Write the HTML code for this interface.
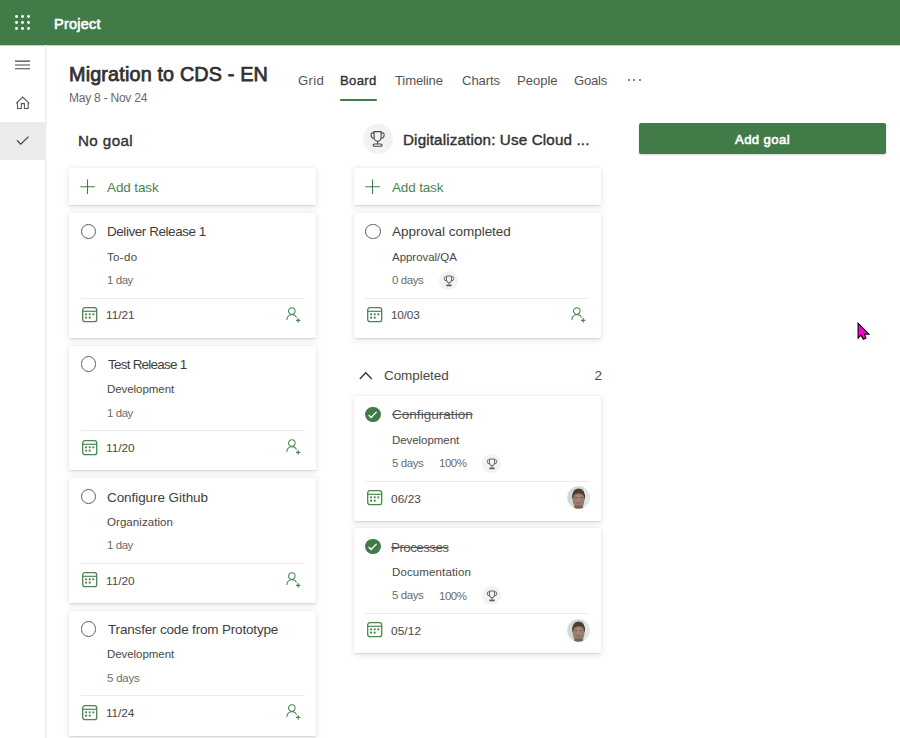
<!DOCTYPE html>
<html><head><meta charset="utf-8"><style>
html,body{margin:0;padding:0;width:900px;height:738px;overflow:hidden;background:#fff}
body{position:relative;font-family:"Liberation Sans",sans-serif}
.t{position:absolute;white-space:nowrap}
</style></head><body>
<div style="position:absolute;left:0px;top:0px;width:900px;height:45px;background:#407b48;box-shadow:0 0.6px 0.6px rgba(64,123,72,.35)"></div>
<svg style="position:absolute;left:14.8px;top:15.2px" width="3" height="3" viewBox="0 0 3 3"><circle cx="1.5" cy="1.5" r="1.45" fill="#fff"/></svg>
<svg style="position:absolute;left:14.8px;top:20.9px" width="3" height="3" viewBox="0 0 3 3"><circle cx="1.5" cy="1.5" r="1.45" fill="#fff"/></svg>
<svg style="position:absolute;left:14.8px;top:26.6px" width="3" height="3" viewBox="0 0 3 3"><circle cx="1.5" cy="1.5" r="1.45" fill="#fff"/></svg>
<svg style="position:absolute;left:20.700000000000003px;top:15.2px" width="3" height="3" viewBox="0 0 3 3"><circle cx="1.5" cy="1.5" r="1.45" fill="#fff"/></svg>
<svg style="position:absolute;left:20.700000000000003px;top:20.9px" width="3" height="3" viewBox="0 0 3 3"><circle cx="1.5" cy="1.5" r="1.45" fill="#fff"/></svg>
<svg style="position:absolute;left:20.700000000000003px;top:26.6px" width="3" height="3" viewBox="0 0 3 3"><circle cx="1.5" cy="1.5" r="1.45" fill="#fff"/></svg>
<svg style="position:absolute;left:26.6px;top:15.2px" width="3" height="3" viewBox="0 0 3 3"><circle cx="1.5" cy="1.5" r="1.45" fill="#fff"/></svg>
<svg style="position:absolute;left:26.6px;top:20.9px" width="3" height="3" viewBox="0 0 3 3"><circle cx="1.5" cy="1.5" r="1.45" fill="#fff"/></svg>
<svg style="position:absolute;left:26.6px;top:26.6px" width="3" height="3" viewBox="0 0 3 3"><circle cx="1.5" cy="1.5" r="1.45" fill="#fff"/></svg>
<div class="t" style="left:54.00px;top:17.00px;font-size:14.5px;line-height:14.5px;color:#fff;font-weight:400;letter-spacing:0.217px;-webkit-text-stroke:0.6px #fff;">Project</div>
<div style="position:absolute;left:45px;top:45px;width:1px;height:693px;background:#eeedec"></div>
<div style="position:absolute;left:46px;top:45px;width:1px;height:693px;background:#f5f4f3"></div>
<div style="position:absolute;left:0px;top:121.6px;width:45.4px;height:38.2px;background:#edebe9"></div>
<svg style="position:absolute;left:14px;top:58px" width="17" height="13" viewBox="0 0 17 13"><path d="M1 3.1 H16 M1 7 H16 M1 10.8 H16" stroke="#484644" stroke-width="1.05"/></svg>
<svg style="position:absolute;left:15px;top:95px" width="16" height="15" viewBox="0 0 16 15"><path d="M1.2 8.3 L7.7 2 L14.2 8.3 M2.5 7 V13.5 H6.3 V8.6 H9.4 V13.5 H13.2 V7" fill="none" stroke="#575553" stroke-width="1.05"/></svg>
<svg style="position:absolute;left:16px;top:135px" width="14" height="11" viewBox="0 0 14 11"><path d="M1.0 5.3 L4.7 9.1 L12.5 1.6" fill="none" stroke="#3b3a39" stroke-width="1.2"/></svg>
<div class="t" style="left:69.00px;top:65.00px;font-size:19.8px;line-height:19.8px;color:#323130;font-weight:400;letter-spacing:0.160px;-webkit-text-stroke:0.75px #323130;">Migration to CDS - EN</div>
<div class="t" style="left:69.00px;top:92.00px;font-size:12.0px;line-height:12.0px;color:#6a6866;font-weight:400;letter-spacing:-0.231px;">May 8 - Nov 24</div>
<div class="t" style="left:298.00px;top:74.00px;font-size:13.1px;line-height:13.1px;color:#565452;font-weight:400;letter-spacing:0.333px;">Grid</div>
<div class="t" style="left:340.00px;top:74.00px;font-size:13.1px;line-height:13.1px;color:#323130;font-weight:400;letter-spacing:0.350px;-webkit-text-stroke:0.35px #323130;">Board</div>
<div class="t" style="left:395.00px;top:74.00px;font-size:13.1px;line-height:13.1px;color:#565452;font-weight:400;letter-spacing:-0.143px;">Timeline</div>
<div class="t" style="left:462.00px;top:74.00px;font-size:13.1px;line-height:13.1px;color:#565452;font-weight:400;letter-spacing:-0.080px;">Charts</div>
<div class="t" style="left:517.00px;top:74.00px;font-size:13.1px;line-height:13.1px;color:#565452;font-weight:400;letter-spacing:-0.040px;">People</div>
<div class="t" style="left:574.00px;top:74.00px;font-size:13.1px;line-height:13.1px;color:#565452;font-weight:400;letter-spacing:-0.250px;">Goals</div>
<div style="position:absolute;left:340px;top:98.6px;width:37px;height:2px;background:#407b48;border-radius:1px"></div>
<div style="position:absolute;left:627.5px;top:79px;width:2px;height:2px;background:#605e5c;border-radius:50%"></div>
<div style="position:absolute;left:633.3px;top:79px;width:2px;height:2px;background:#605e5c;border-radius:50%"></div>
<div style="position:absolute;left:639.1px;top:79px;width:2px;height:2px;background:#605e5c;border-radius:50%"></div>
<div class="t" style="left:78.00px;top:133.00px;font-size:15.2px;line-height:15.2px;color:#323130;font-weight:400;letter-spacing:0.400px;-webkit-text-stroke:0.35px #323130;">No goal</div>
<div style="position:absolute;left:362.7px;top:123.7px;width:30px;height:30px;background:#f3f2f1;border-radius:50%"></div>
<svg style="position:absolute;left:369px;top:129px" width="18" height="19" viewBox="0 0 18 19"><path d="M5.1 2.6 H12.1 V8.2 A3.5 4 0 0 1 5.1 8.2 Z M5.1 3.9 H3.7 A1.6 1.6 0 0 0 2.1 5.5 V6.2 A3.2 3.2 0 0 0 5.4 9.5 M12.1 3.9 H13.5 A1.6 1.6 0 0 1 15.1 5.5 V6.2 A3.2 3.2 0 0 1 11.8 9.5 M8.6 12.2 V15 M5.3 15 H11.9 A0.9 0.9 0 0 1 11.9 17.3 H5.3 A0.9 0.9 0 0 1 5.3 15 Z" fill="none" stroke="#484644" stroke-width="1.1"/></svg>
<div class="t" style="left:403.00px;top:132.00px;font-size:15.2px;line-height:15.2px;color:#323130;font-weight:400;letter-spacing:0.145px;-webkit-text-stroke:0.4px #323130;">Digitalization: Use Cloud ...</div>
<div style="position:absolute;left:639px;top:123.4px;width:246.5px;height:30.8px;background:#407b48;border-radius:2px;box-shadow:0 1px 2px rgba(0,0,0,.2)"></div>
<div class="t" style="left:735.00px;top:133.00px;font-size:13.1px;line-height:13.1px;color:#fff;font-weight:400;letter-spacing:0.412px;-webkit-text-stroke:0.6px #fff;">Add goal</div>
<div style="position:absolute;left:69.3px;top:167.7px;width:247px;height:37.4px;background:#fff;border-radius:1.5px;box-shadow:0 1.8px 7px rgba(0,0,0,.11),0 0.3px 1.4px rgba(0,0,0,.10)"></div>
<svg style="position:absolute;left:80.3px;top:178.5px" width="16" height="16" viewBox="0 0 16 16"><path d="M7.5 0.5 V15 M0.3 7.7 H14.8" fill="none" stroke="#407b48" stroke-width="1.1"/></svg>
<div class="t" style="left:107.00px;top:181.00px;font-size:13.5px;line-height:13.5px;color:#4a8550;font-weight:400;letter-spacing:-0.116px;">Add task</div>
<div style="position:absolute;left:354.0px;top:167.7px;width:247px;height:37.4px;background:#fff;border-radius:1.5px;box-shadow:0 1.8px 7px rgba(0,0,0,.11),0 0.3px 1.4px rgba(0,0,0,.10)"></div>
<svg style="position:absolute;left:365.0px;top:178.5px" width="16" height="16" viewBox="0 0 16 16"><path d="M7.5 0.5 V15 M0.3 7.7 H14.8" fill="none" stroke="#407b48" stroke-width="1.1"/></svg>
<div class="t" style="left:392.00px;top:181.00px;font-size:13.5px;line-height:13.5px;color:#4a8550;font-weight:400;letter-spacing:-0.160px;">Add task</div>
<div style="position:absolute;left:69.3px;top:213.0px;width:247px;height:124.9px;background:#fff;border-radius:1.5px;box-shadow:0 1.8px 7px rgba(0,0,0,.11),0 0.3px 1.4px rgba(0,0,0,.10)"></div>
<div style="position:absolute;left:80.60px;top:223.50px;width:13.5px;height:13.5px;border-radius:50%;border:1px solid #605e5c"></div>
<div class="t" style="left:107.00px;top:225.00px;font-size:13.5px;line-height:13.5px;color:#3f3e3d;font-weight:400;letter-spacing:-0.448px;">Deliver Release 1</div>
<div class="t" style="left:107.00px;top:252.00px;font-size:11.5px;line-height:11.5px;color:#4a4846;font-weight:400;letter-spacing:0.325px;">To-do</div>
<div class="t" style="left:107.00px;top:275.00px;font-size:11.5px;line-height:11.5px;color:#6e6c6a;font-weight:400;letter-spacing:-0.450px;">1 day</div>
<div style="position:absolute;left:80.6px;top:297.6px;width:224px;height:1px;background:#edebe9"></div>
<svg style="position:absolute;left:81.8px;top:307.0px" width="16" height="16" viewBox="0 0 16 16"><rect x="0.7" y="0.7" width="14" height="14" rx="2.2" fill="none" stroke="#4b8552" stroke-width="1.3"/><path d="M0.7 4.3 H14.7" stroke="#4b8552" stroke-width="1.2"/><circle cx="4.1" cy="7.3" r="1.1" fill="#4b8552"/><circle cx="7.7" cy="7.3" r="1.1" fill="#4b8552"/><circle cx="11.3" cy="7.3" r="1.1" fill="#4b8552"/><circle cx="4.1" cy="10.7" r="1.1" fill="#4b8552"/><circle cx="7.7" cy="10.7" r="1.1" fill="#4b8552"/></svg>
<div class="t" style="left:106.00px;top:310.00px;font-size:11.8px;line-height:11.8px;color:#4a4846;font-weight:400;letter-spacing:-0.025px;">11/21</div>
<svg style="position:absolute;left:286.4px;top:306.5px" width="17" height="17" viewBox="0 0 17 17"><circle cx="5.8" cy="4.1" r="3.3" fill="none" stroke="#4b8552" stroke-width="1.05"/><path d="M0.9 12.9 A5.2 5.4 0 0 1 10.6 10.4" fill="none" stroke="#4b8552" stroke-width="1.05"/><path d="M12.2 11.2 V15.6 M10 13.4 H14.4" stroke="#4b8552" stroke-width="1.25"/></svg>
<div style="position:absolute;left:69.3px;top:345.6px;width:247px;height:124.9px;background:#fff;border-radius:1.5px;box-shadow:0 1.8px 7px rgba(0,0,0,.11),0 0.3px 1.4px rgba(0,0,0,.10)"></div>
<div style="position:absolute;left:80.60px;top:356.10px;width:13.5px;height:13.5px;border-radius:50%;border:1px solid #605e5c"></div>
<div class="t" style="left:108.00px;top:358.00px;font-size:13.5px;line-height:13.5px;color:#3f3e3d;font-weight:400;letter-spacing:-0.775px;">Test Release 1</div>
<div class="t" style="left:107.00px;top:384.00px;font-size:11.5px;line-height:11.5px;color:#4a4846;font-weight:400;letter-spacing:-0.060px;">Development</div>
<div class="t" style="left:107.00px;top:408.00px;font-size:11.5px;line-height:11.5px;color:#6e6c6a;font-weight:400;letter-spacing:-0.450px;">1 day</div>
<div style="position:absolute;left:80.6px;top:430.20000000000005px;width:224px;height:1px;background:#edebe9"></div>
<svg style="position:absolute;left:81.8px;top:439.6px" width="16" height="16" viewBox="0 0 16 16"><rect x="0.7" y="0.7" width="14" height="14" rx="2.2" fill="none" stroke="#4b8552" stroke-width="1.3"/><path d="M0.7 4.3 H14.7" stroke="#4b8552" stroke-width="1.2"/><circle cx="4.1" cy="7.3" r="1.1" fill="#4b8552"/><circle cx="7.7" cy="7.3" r="1.1" fill="#4b8552"/><circle cx="11.3" cy="7.3" r="1.1" fill="#4b8552"/><circle cx="4.1" cy="10.7" r="1.1" fill="#4b8552"/><circle cx="7.7" cy="10.7" r="1.1" fill="#4b8552"/></svg>
<div class="t" style="left:106.00px;top:443.00px;font-size:11.8px;line-height:11.8px;color:#4a4846;font-weight:400;letter-spacing:-0.025px;">11/20</div>
<svg style="position:absolute;left:286.4px;top:439.1px" width="17" height="17" viewBox="0 0 17 17"><circle cx="5.8" cy="4.1" r="3.3" fill="none" stroke="#4b8552" stroke-width="1.05"/><path d="M0.9 12.9 A5.2 5.4 0 0 1 10.6 10.4" fill="none" stroke="#4b8552" stroke-width="1.05"/><path d="M12.2 11.2 V15.6 M10 13.4 H14.4" stroke="#4b8552" stroke-width="1.25"/></svg>
<div style="position:absolute;left:69.3px;top:478.2px;width:247px;height:124.9px;background:#fff;border-radius:1.5px;box-shadow:0 1.8px 7px rgba(0,0,0,.11),0 0.3px 1.4px rgba(0,0,0,.10)"></div>
<div style="position:absolute;left:80.60px;top:488.70px;width:13.5px;height:13.5px;border-radius:50%;border:1px solid #605e5c"></div>
<div class="t" style="left:107.00px;top:491.00px;font-size:13.5px;line-height:13.5px;color:#3f3e3d;font-weight:400;letter-spacing:-0.067px;">Configure Github</div>
<div class="t" style="left:107.00px;top:517.00px;font-size:11.5px;line-height:11.5px;color:#4a4846;font-weight:400;letter-spacing:0.061px;">Organization</div>
<div class="t" style="left:107.00px;top:540.00px;font-size:11.5px;line-height:11.5px;color:#6e6c6a;font-weight:400;letter-spacing:-0.450px;">1 day</div>
<div style="position:absolute;left:80.6px;top:562.8px;width:224px;height:1px;background:#edebe9"></div>
<svg style="position:absolute;left:81.8px;top:572.2px" width="16" height="16" viewBox="0 0 16 16"><rect x="0.7" y="0.7" width="14" height="14" rx="2.2" fill="none" stroke="#4b8552" stroke-width="1.3"/><path d="M0.7 4.3 H14.7" stroke="#4b8552" stroke-width="1.2"/><circle cx="4.1" cy="7.3" r="1.1" fill="#4b8552"/><circle cx="7.7" cy="7.3" r="1.1" fill="#4b8552"/><circle cx="11.3" cy="7.3" r="1.1" fill="#4b8552"/><circle cx="4.1" cy="10.7" r="1.1" fill="#4b8552"/><circle cx="7.7" cy="10.7" r="1.1" fill="#4b8552"/></svg>
<div class="t" style="left:106.00px;top:576.00px;font-size:11.8px;line-height:11.8px;color:#4a4846;font-weight:400;letter-spacing:-0.025px;">11/20</div>
<svg style="position:absolute;left:286.4px;top:571.7px" width="17" height="17" viewBox="0 0 17 17"><circle cx="5.8" cy="4.1" r="3.3" fill="none" stroke="#4b8552" stroke-width="1.05"/><path d="M0.9 12.9 A5.2 5.4 0 0 1 10.6 10.4" fill="none" stroke="#4b8552" stroke-width="1.05"/><path d="M12.2 11.2 V15.6 M10 13.4 H14.4" stroke="#4b8552" stroke-width="1.25"/></svg>
<div style="position:absolute;left:69.3px;top:610.8px;width:247px;height:124.9px;background:#fff;border-radius:1.5px;box-shadow:0 1.8px 7px rgba(0,0,0,.11),0 0.3px 1.4px rgba(0,0,0,.10)"></div>
<div style="position:absolute;left:80.60px;top:621.30px;width:13.5px;height:13.5px;border-radius:50%;border:1px solid #605e5c"></div>
<div class="t" style="left:108.00px;top:623.00px;font-size:13.5px;line-height:13.5px;color:#3f3e3d;font-weight:400;letter-spacing:-0.175px;">Transfer code from Prototype</div>
<div class="t" style="left:107.00px;top:649.00px;font-size:11.5px;line-height:11.5px;color:#4a4846;font-weight:400;letter-spacing:-0.060px;">Development</div>
<div class="t" style="left:107.00px;top:673.00px;font-size:11.5px;line-height:11.5px;color:#6e6c6a;font-weight:400;letter-spacing:-0.220px;">5 days</div>
<div style="position:absolute;left:80.6px;top:695.4px;width:224px;height:1px;background:#edebe9"></div>
<svg style="position:absolute;left:81.8px;top:704.8px" width="16" height="16" viewBox="0 0 16 16"><rect x="0.7" y="0.7" width="14" height="14" rx="2.2" fill="none" stroke="#4b8552" stroke-width="1.3"/><path d="M0.7 4.3 H14.7" stroke="#4b8552" stroke-width="1.2"/><circle cx="4.1" cy="7.3" r="1.1" fill="#4b8552"/><circle cx="7.7" cy="7.3" r="1.1" fill="#4b8552"/><circle cx="11.3" cy="7.3" r="1.1" fill="#4b8552"/><circle cx="4.1" cy="10.7" r="1.1" fill="#4b8552"/><circle cx="7.7" cy="10.7" r="1.1" fill="#4b8552"/></svg>
<div class="t" style="left:106.00px;top:708.00px;font-size:11.8px;line-height:11.8px;color:#4a4846;font-weight:400;letter-spacing:-0.075px;">11/24</div>
<svg style="position:absolute;left:286.4px;top:704.3px" width="17" height="17" viewBox="0 0 17 17"><circle cx="5.8" cy="4.1" r="3.3" fill="none" stroke="#4b8552" stroke-width="1.05"/><path d="M0.9 12.9 A5.2 5.4 0 0 1 10.6 10.4" fill="none" stroke="#4b8552" stroke-width="1.05"/><path d="M12.2 11.2 V15.6 M10 13.4 H14.4" stroke="#4b8552" stroke-width="1.25"/></svg>
<div style="position:absolute;left:354.0px;top:213.0px;width:247px;height:124.9px;background:#fff;border-radius:1.5px;box-shadow:0 1.8px 7px rgba(0,0,0,.11),0 0.3px 1.4px rgba(0,0,0,.10)"></div>
<div style="position:absolute;left:365.30px;top:223.50px;width:13.5px;height:13.5px;border-radius:50%;border:1px solid #605e5c"></div>
<div class="t" style="left:392.00px;top:225.00px;font-size:13.5px;line-height:13.5px;color:#3f3e3d;font-weight:400;letter-spacing:-0.029px;">Approval completed</div>
<div class="t" style="left:392.00px;top:252.00px;font-size:11.5px;line-height:11.5px;color:#4a4846;font-weight:400;letter-spacing:-0.040px;">Approval/QA</div>
<div class="t" style="left:392.00px;top:275.00px;font-size:11.5px;line-height:11.5px;color:#6e6c6a;font-weight:400;letter-spacing:-0.420px;">0 days</div>
<div style="position:absolute;left:439.3px;top:270.6px;width:19px;height:19px;background:#f3f2f1;border-radius:50%"></div>
<svg style="position:absolute;left:441.8px;top:273.8px" width="14" height="14" viewBox="0 0 14 14"><path d="M4.5 2.0 H9.5 V5.9 A2.5 2.9 0 0 1 4.5 5.9 Z M4.5 2.9 H3.4 A1.1 1.1 0 0 0 2.3 4 V4.5 A2.3 2.3 0 0 0 4.7 6.9 M9.5 2.9 H10.6 A1.1 1.1 0 0 1 11.7 4 V4.5 A2.3 2.3 0 0 1 9.3 6.9 M7 8.8 V10.6" fill="none" stroke="#605e5c" stroke-width="0.95"/><rect x="4.3" y="10.5" width="5.4" height="1.8" rx="0.6" fill="#605e5c"/></svg>
<div style="position:absolute;left:365.3px;top:297.6px;width:224px;height:1px;background:#edebe9"></div>
<svg style="position:absolute;left:366.5px;top:307.0px" width="16" height="16" viewBox="0 0 16 16"><rect x="0.7" y="0.7" width="14" height="14" rx="2.2" fill="none" stroke="#4b8552" stroke-width="1.3"/><path d="M0.7 4.3 H14.7" stroke="#4b8552" stroke-width="1.2"/><circle cx="4.1" cy="7.3" r="1.1" fill="#4b8552"/><circle cx="7.7" cy="7.3" r="1.1" fill="#4b8552"/><circle cx="11.3" cy="7.3" r="1.1" fill="#4b8552"/><circle cx="4.1" cy="10.7" r="1.1" fill="#4b8552"/><circle cx="7.7" cy="10.7" r="1.1" fill="#4b8552"/></svg>
<div class="t" style="left:391.00px;top:310.00px;font-size:11.8px;line-height:11.8px;color:#4a4846;font-weight:400;letter-spacing:-0.200px;">10/03</div>
<svg style="position:absolute;left:571.1px;top:306.5px" width="17" height="17" viewBox="0 0 17 17"><circle cx="5.8" cy="4.1" r="3.3" fill="none" stroke="#4b8552" stroke-width="1.05"/><path d="M0.9 12.9 A5.2 5.4 0 0 1 10.6 10.4" fill="none" stroke="#4b8552" stroke-width="1.05"/><path d="M12.2 11.2 V15.6 M10 13.4 H14.4" stroke="#4b8552" stroke-width="1.25"/></svg>
<svg style="position:absolute;left:358.5px;top:370.5px" width="14" height="9" viewBox="0 0 14 9"><path d="M0.8 8 L6.8 1.8 L12.8 8" fill="none" stroke="#323130" stroke-width="1.3"/></svg>
<div class="t" style="left:384.00px;top:369.00px;font-size:13.5px;line-height:13.5px;color:#4a4846;font-weight:400;letter-spacing:-0.075px;">Completed</div>
<div class="t" style="left:594.40px;top:369.00px;font-size:13.5px;line-height:13.5px;color:#4a4846;font-weight:400;">2</div>
<div style="position:absolute;left:354.0px;top:396.1px;width:247px;height:124.9px;background:#fff;border-radius:1.5px;box-shadow:0 1.8px 7px rgba(0,0,0,.11),0 0.3px 1.4px rgba(0,0,0,.10)"></div>
<div style="position:absolute;left:365.20px;top:406.50px;width:15.4px;height:15.4px;border-radius:50%;background:#407b48"></div>
<svg style="position:absolute;left:365.2px;top:406.5px" width="16" height="16" viewBox="0 0 16 16"><path d="M3.7 8.0 L6.1 10.5 L11.6 4.9" fill="none" stroke="#fff" stroke-width="1.35"/></svg>
<div class="t" style="left:392.00px;top:408.00px;font-size:13.5px;line-height:13.5px;color:#5a5856;font-weight:400;letter-spacing:0.035px;text-decoration:line-through">Configuration</div>
<div class="t" style="left:392.00px;top:435.00px;font-size:11.5px;line-height:11.5px;color:#4a4846;font-weight:400;letter-spacing:-0.060px;">Development</div>
<div class="t" style="left:392.00px;top:458.00px;font-size:11.5px;line-height:11.5px;color:#6e6c6a;font-weight:400;letter-spacing:-0.420px;">5 days</div>
<div class="t" style="left:439.00px;top:458.00px;font-size:11.5px;line-height:11.5px;color:#6e6c6a;font-weight:400;letter-spacing:-0.468px;">100%</div>
<div style="position:absolute;left:482.0px;top:453.70000000000005px;width:19px;height:19px;background:#f3f2f1;border-radius:50%"></div>
<svg style="position:absolute;left:484.5px;top:456.90000000000003px" width="14" height="14" viewBox="0 0 14 14"><path d="M4.5 2.0 H9.5 V5.9 A2.5 2.9 0 0 1 4.5 5.9 Z M4.5 2.9 H3.4 A1.1 1.1 0 0 0 2.3 4 V4.5 A2.3 2.3 0 0 0 4.7 6.9 M9.5 2.9 H10.6 A1.1 1.1 0 0 1 11.7 4 V4.5 A2.3 2.3 0 0 1 9.3 6.9 M7 8.8 V10.6" fill="none" stroke="#605e5c" stroke-width="0.95"/><rect x="4.3" y="10.5" width="5.4" height="1.8" rx="0.6" fill="#605e5c"/></svg>
<div style="position:absolute;left:365.3px;top:480.70000000000005px;width:224px;height:1px;background:#edebe9"></div>
<svg style="position:absolute;left:366.5px;top:490.1px" width="16" height="16" viewBox="0 0 16 16"><rect x="0.7" y="0.7" width="14" height="14" rx="2.2" fill="none" stroke="#4b8552" stroke-width="1.3"/><path d="M0.7 4.3 H14.7" stroke="#4b8552" stroke-width="1.2"/><circle cx="4.1" cy="7.3" r="1.1" fill="#4b8552"/><circle cx="7.7" cy="7.3" r="1.1" fill="#4b8552"/><circle cx="11.3" cy="7.3" r="1.1" fill="#4b8552"/><circle cx="4.1" cy="10.7" r="1.1" fill="#4b8552"/><circle cx="7.7" cy="10.7" r="1.1" fill="#4b8552"/></svg>
<div class="t" style="left:391.00px;top:494.00px;font-size:11.8px;line-height:11.8px;color:#4a4846;font-weight:400;letter-spacing:0.100px;">06/23</div>
<svg style="position:absolute;left:566.5px;top:486.3px" width="23" height="23" viewBox="0 0 23 23"><defs><clipPath id="c396"><circle cx="11.5" cy="11.5" r="11.2"/></clipPath><filter id="bl396" x="-20%" y="-20%" width="140%" height="140%"><feGaussianBlur stdDeviation="0.55"/></filter></defs><g clip-path="url(#c396)"><rect width="23" height="23" fill="#cfd9d7"/><rect x="17" y="0" width="6" height="23" fill="#dfe8e8"/><g filter="url(#bl396)"><ellipse cx="11.6" cy="13.6" rx="6" ry="9.2" fill="#9b7b69"/><ellipse cx="11.6" cy="12.5" rx="3.5" ry="4" fill="#a5837a"/><path d="M5.2 13 Q4.4 2.8 11.6 2.5 Q18.8 2.8 18 13 L16.9 12 Q17.1 7.6 11.6 7.3 Q6.1 7.6 6.3 12 Z" fill="#4d3c31"/><ellipse cx="9.2" cy="11.6" rx="1.3" ry="0.6" fill="#6e5547"/><ellipse cx="14" cy="11.6" rx="1.3" ry="0.6" fill="#6e5547"/><path d="M9.6 16.6 Q11.6 17.4 13.6 16.6" stroke="#7d5e50" stroke-width="0.8" fill="none"/><rect x="7.3" y="19.6" width="8.6" height="4" fill="#7a6152"/></g></g></svg>
<div style="position:absolute;left:354.0px;top:528.3px;width:247px;height:124.9px;background:#fff;border-radius:1.5px;box-shadow:0 1.8px 7px rgba(0,0,0,.11),0 0.3px 1.4px rgba(0,0,0,.10)"></div>
<div style="position:absolute;left:365.20px;top:538.70px;width:15.4px;height:15.4px;border-radius:50%;background:#407b48"></div>
<svg style="position:absolute;left:365.2px;top:538.6999999999999px" width="16" height="16" viewBox="0 0 16 16"><path d="M3.7 8.0 L6.1 10.5 L11.6 4.9" fill="none" stroke="#fff" stroke-width="1.35"/></svg>
<div class="t" style="left:391.00px;top:541.00px;font-size:13.5px;line-height:13.5px;color:#5a5856;font-weight:400;letter-spacing:-0.617px;text-decoration:line-through">Processes</div>
<div class="t" style="left:392.00px;top:567.00px;font-size:11.5px;line-height:11.5px;color:#4a4846;font-weight:400;letter-spacing:0.125px;">Documentation</div>
<div class="t" style="left:392.00px;top:590.00px;font-size:11.5px;line-height:11.5px;color:#6e6c6a;font-weight:400;letter-spacing:-0.420px;">5 days</div>
<div class="t" style="left:439.00px;top:591.00px;font-size:11.5px;line-height:11.5px;color:#6e6c6a;font-weight:400;letter-spacing:-0.468px;">100%</div>
<div style="position:absolute;left:482.0px;top:585.9px;width:19px;height:19px;background:#f3f2f1;border-radius:50%"></div>
<svg style="position:absolute;left:484.5px;top:589.1px" width="14" height="14" viewBox="0 0 14 14"><path d="M4.5 2.0 H9.5 V5.9 A2.5 2.9 0 0 1 4.5 5.9 Z M4.5 2.9 H3.4 A1.1 1.1 0 0 0 2.3 4 V4.5 A2.3 2.3 0 0 0 4.7 6.9 M9.5 2.9 H10.6 A1.1 1.1 0 0 1 11.7 4 V4.5 A2.3 2.3 0 0 1 9.3 6.9 M7 8.8 V10.6" fill="none" stroke="#605e5c" stroke-width="0.95"/><rect x="4.3" y="10.5" width="5.4" height="1.8" rx="0.6" fill="#605e5c"/></svg>
<div style="position:absolute;left:365.3px;top:612.9px;width:224px;height:1px;background:#edebe9"></div>
<svg style="position:absolute;left:366.5px;top:622.3px" width="16" height="16" viewBox="0 0 16 16"><rect x="0.7" y="0.7" width="14" height="14" rx="2.2" fill="none" stroke="#4b8552" stroke-width="1.3"/><path d="M0.7 4.3 H14.7" stroke="#4b8552" stroke-width="1.2"/><circle cx="4.1" cy="7.3" r="1.1" fill="#4b8552"/><circle cx="7.7" cy="7.3" r="1.1" fill="#4b8552"/><circle cx="11.3" cy="7.3" r="1.1" fill="#4b8552"/><circle cx="4.1" cy="10.7" r="1.1" fill="#4b8552"/><circle cx="7.7" cy="10.7" r="1.1" fill="#4b8552"/></svg>
<div class="t" style="left:391.00px;top:626.00px;font-size:11.8px;line-height:11.8px;color:#4a4846;font-weight:400;letter-spacing:0.125px;">05/12</div>
<svg style="position:absolute;left:566.5px;top:618.5px" width="23" height="23" viewBox="0 0 23 23"><defs><clipPath id="c528"><circle cx="11.5" cy="11.5" r="11.2"/></clipPath><filter id="bl528" x="-20%" y="-20%" width="140%" height="140%"><feGaussianBlur stdDeviation="0.55"/></filter></defs><g clip-path="url(#c528)"><rect width="23" height="23" fill="#cfd9d7"/><rect x="17" y="0" width="6" height="23" fill="#dfe8e8"/><g filter="url(#bl528)"><ellipse cx="11.6" cy="13.6" rx="6" ry="9.2" fill="#9b7b69"/><ellipse cx="11.6" cy="12.5" rx="3.5" ry="4" fill="#a5837a"/><path d="M5.2 13 Q4.4 2.8 11.6 2.5 Q18.8 2.8 18 13 L16.9 12 Q17.1 7.6 11.6 7.3 Q6.1 7.6 6.3 12 Z" fill="#4d3c31"/><ellipse cx="9.2" cy="11.6" rx="1.3" ry="0.6" fill="#6e5547"/><ellipse cx="14" cy="11.6" rx="1.3" ry="0.6" fill="#6e5547"/><path d="M9.6 16.6 Q11.6 17.4 13.6 16.6" stroke="#7d5e50" stroke-width="0.8" fill="none"/><rect x="7.3" y="19.6" width="8.6" height="4" fill="#7a6152"/></g></g></svg>
<svg style="position:absolute;left:855px;top:320px" width="18" height="22" viewBox="0 0 18 22"><path d="M3.1 3.3 V18.1 L6 15.2 L8.3 19.2 L11 17.9 L9.5 14.2 H14 Z" fill="#ff00d4" stroke="#000" stroke-width="1.1" stroke-linejoin="miter"/></svg>
</body></html>
